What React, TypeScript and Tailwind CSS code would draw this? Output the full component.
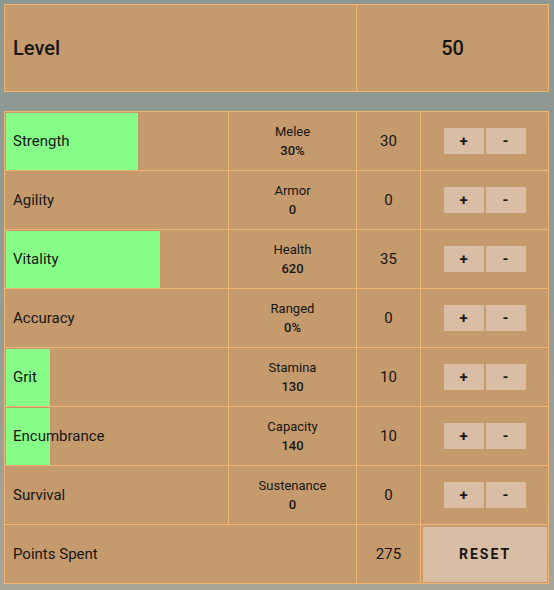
const stats = [
  { name: 'Strength', label: 'Melee', value: '30%', points: 30 },
  { name: 'Agility', label: 'Armor', value: '0', points: 0 },
  { name: 'Vitality', label: 'Health', value: '620', points: 35 },
  { name: 'Accuracy', label: 'Ranged', value: '0%', points: 0 },
  { name: 'Grit', label: 'Stamina', value: '130', points: 10 },
  { name: 'Encumbrance', label: 'Capacity', value: '140', points: 10 },
  { name: 'Survival', label: 'Sustenance', value: '0', points: 0 },
];

const cell = 'border-r border-b border-[#f2b672] h-[59px]';

export default function App() {
  const spent = 275;

  return (
    <div className="h-[590px] w-[554px] p-1 bg-gradient-to-b from-[#8c9893] via-[#929b94] to-[#a8a498] text-[#161616] font-['Roboto','Liberation_Sans',sans-serif]">
      <div className="w-[545px] grid grid-cols-[352px_192px] border-t border-l border-[#f2b672] bg-[#c59a6c]">
        <div className="h-[87px] border-r border-b border-[#f2b672] flex items-center pl-2 text-[20px] font-medium">Level</div>
        <div className="h-[87px] border-r border-b border-[#f2b672] flex items-center justify-center text-[20px] font-medium">50</div>
      </div>

      <div className="mt-[19px] w-[545px] grid grid-cols-[224px_128px_64px_128px] border-t border-l border-[#f2b672] bg-[#c59a6c]">
        {stats.map(s => (
          <div key={s.name} className="contents">
            <div className={`${cell} relative flex items-center pl-2 text-[15px]`}>
              {s.points > 0 && (
                <div className="absolute left-px top-px bottom-0 bg-[#86fd86]" style={{ width: s.points * 4.4 }} />
              )}
              <span className="relative">{s.name}</span>
            </div>
            <div className={`${cell} flex flex-col items-center justify-center text-[13px] leading-[19px]`}>
              <span>{s.label}</span>
              <span className="font-medium">{s.value}</span>
            </div>
            <div className={`${cell} flex items-center justify-center text-[15px]`}>{s.points}</div>
            <div className={`${cell} flex items-center justify-center gap-[2px]`}>
              <button className="w-10 h-[26px] bg-[#d9bea5] text-[15px] font-bold">+</button>
              <button className="w-10 h-[26px] bg-[#d9bea5] text-[15px] font-bold">-</button>
            </div>
          </div>
        ))}
        <div className={`${cell} col-span-2 flex items-center pl-2 text-[15px]`}>Points Spent</div>
        <div className={`${cell} flex items-center justify-center text-[15px]`}>{spent}</div>
        <div className={`${cell} pl-[2px] pr-px pt-[2px] pb-px`}>
          <button className="w-full h-full bg-[#d9bea5] text-[14px] font-bold tracking-[2px]">RESET</button>
        </div>
      </div>
    </div>
  );
}
